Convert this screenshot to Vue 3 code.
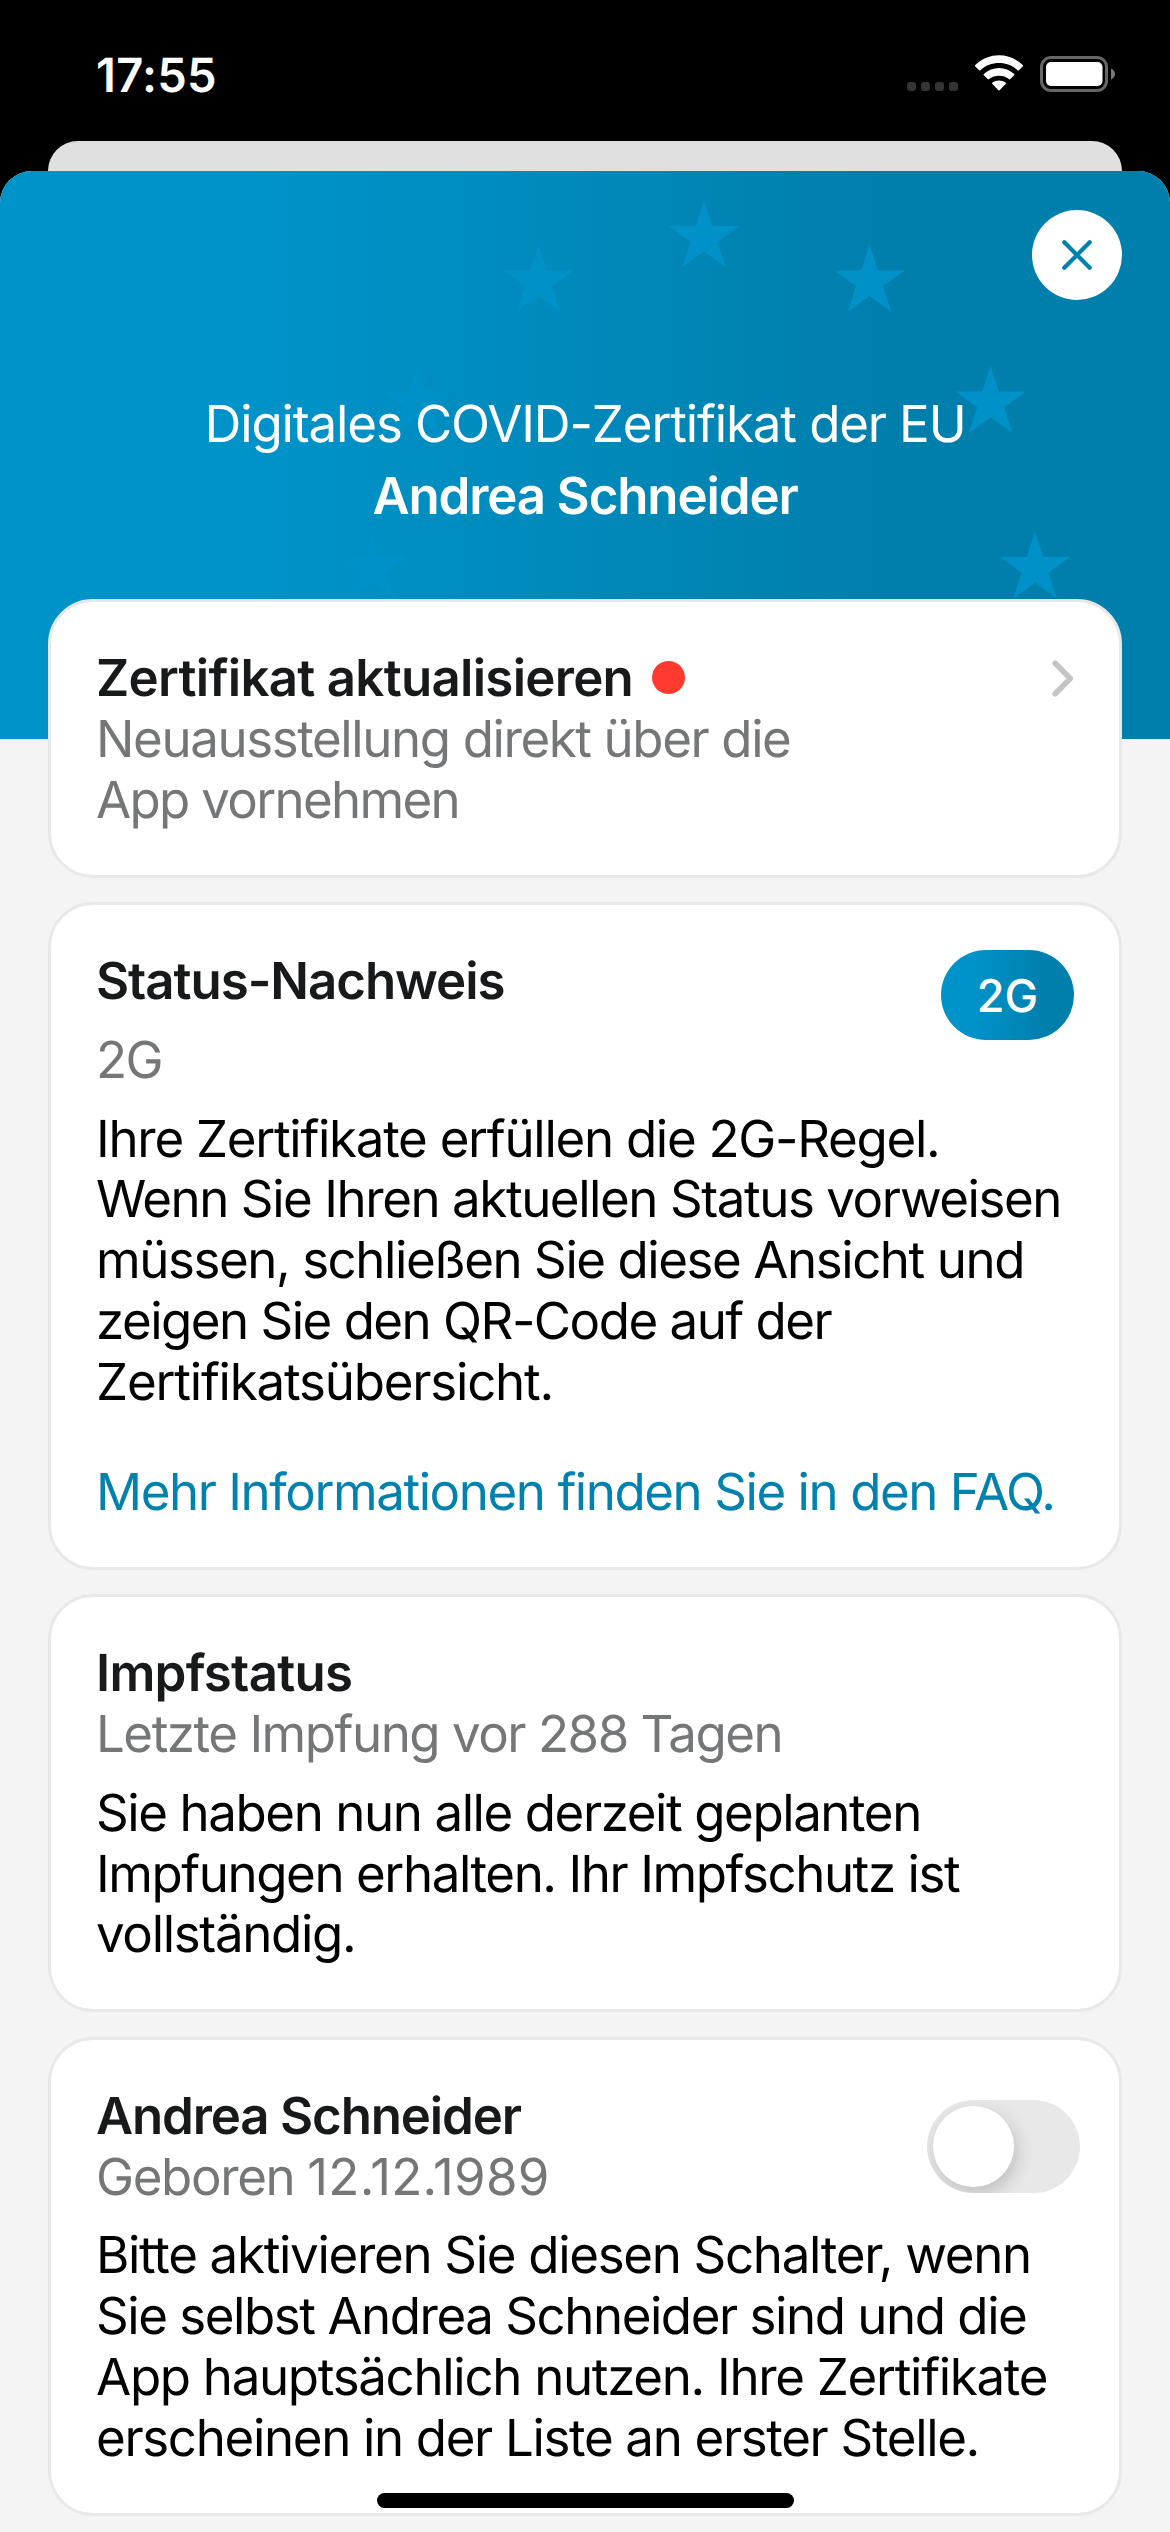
<script setup>
// Stars sit on a ring, one every 30 degrees, like on the EU flag.
const ring = { cx: 704, cy: 397.5, r: 331 }
const starRadius = 37

function starPoints(deg) {
  const a = (deg * Math.PI) / 180
  const cx = ring.cx + ring.r * Math.sin(a)
  const cy = ring.cy - ring.r * Math.cos(a)
  const points = []
  for (let i = 0; i < 10; i++) {
    const r = i % 2 ? starRadius * 0.382 : starRadius
    const t = (i * Math.PI) / 5
    points.push(`${(cx + r * Math.sin(t)).toFixed(2)},${(cy - r * Math.cos(t)).toFixed(2)}`)
  }
  return points.join(' ')
}

const stars = [-90, -60, -30, 0, 30, 60, 90].map(starPoints)

// Every block is a list of lines; ls is the tracking in px.
const cards = [
  {
    accessory: 'chevron',
    title: { t: 'Zertifikat aktualisieren', ls: -0.71 },
    unread: true,
    subtitle: [
      { t: 'Neuausstellung direkt über die', ls: -1.39 },
      { t: 'App vornehmen', ls: -1.68 },
    ],
    body: [],
  },
  {
    accessory: 'badge',
    spaced: true,
    title: { t: 'Status-Nachweis', ls: -1.05 },
    subtitle: [{ t: '2G', ls: -1.6 }],
    body: [
      { t: 'Ihre Zertifikate erfüllen die 2G-Regel.', ls: -1.27 },
      { t: 'Wenn Sie Ihren aktuellen Status vorweisen', ls: -1.43 },
      { t: 'müssen, schließen Sie diese Ansicht und', ls: -1.43 },
      { t: 'zeigen Sie den QR-Code auf der', ls: -1.5 },
      { t: 'Zertifikatsübersicht.', ls: -1.19 },
    ],
    link: { t: 'Mehr Informationen finden Sie in den FAQ.', ls: -1.43 },
  },
  {
    title: { t: 'Impfstatus', ls: -0.72 },
    subtitle: [{ t: 'Letzte Impfung vor 288 Tagen', ls: -1.47 }],
    body: [
      { t: 'Sie haben nun alle derzeit geplanten', ls: -1.41 },
      { t: 'Impfungen erhalten. Ihr Impfschutz ist', ls: -1.42 },
      { t: 'vollständig.', ls: -1.31 },
    ],
  },
  {
    accessory: 'switch',
    title: { t: 'Andrea Schneider', ls: -1.14 },
    subtitle: [{ t: 'Geboren ', ls: -1.35, value: { t: '12.12.1989', ls: 0.25 } }],
    body: [
      { t: 'Bitte aktivieren Sie diesen Schalter, wenn', ls: -1.3 },
      { t: 'Sie selbst Andrea Schneider sind und die', ls: -1.45 },
      { t: 'App hauptsächlich nutzen. Ihre Zertifikate', ls: -1.3 },
      { t: 'erscheinen in der Liste an erster Stelle.', ls: -1.33 },
    ],
  },
]

const tracking = (line) => ({ letterSpacing: `${line.ls}px` })
</script>

<template>
  <div class="screen">
    <div class="statusbar">
      <span class="time">17:55</span>
      <svg class="status-icons" width="209" height="38" viewBox="906 54 209 38">
        <g fill="#343434">
          <rect x="907" y="82" width="9" height="9" rx="3" />
          <rect x="921" y="82" width="9" height="9" rx="3" />
          <rect x="935" y="82" width="9" height="9" rx="3" />
          <rect x="949" y="82" width="9" height="9" rx="3" />
        </g>
        <g fill="#fff">
          <path d="M975.3 66.4a.9.9 0 0 1 0-1.3C988.5 52 1009.500 52 1022.700 65.100a.9.9 0 0 1 0 1.300l-3.900 3.900a.9.9 0 0 1-1.300 0C1007.600 60.600 990.400 60.600 980.500 70.300a.9.9 0 0 1-1.300 0z" />
          <path d="M983.8 75.200a.9.9 0 0 1 0-1.300C992.300 65.900 1005.700 65.900 1014.200 73.900a.9.9 0 0 1 0 1.300l-3.900 3.900a.9.9 0 0 1-1.300 0C1003.900 74.500 994.100 74.500 989 79.100a.9.9 0 0 1-1.300 0z" />
          <path d="M992.4 84a.9.9 0 0 1 0-1.400C996.200 79.700 1001.800 79.700 1005.600 82.600a.9.9 0 0 1 0 1.400l-6 6.300a.9.9 0 0 1-1.200 0z" />
        </g>
        <rect x="1041.500" y="57.500" width="65" height="33" rx="9.500" fill="none" stroke="#666" stroke-width="3" />
        <rect x="1046" y="62" width="56.500" height="24" rx="5" fill="#fff" />
        <path d="M1111 68.500c2.400 1 4 3.200 4 5.500s-1.600 4.500-4 5.500z" fill="#7a7a7a" />
      </svg>
    </div>

    <div class="behind"></div>

    <main class="sheet">
      <header class="hero">
        <svg class="stars" width="1170" height="568" viewBox="0 0 1170 568">
          <polygon v-for="points in stars" :key="points" :points="points" fill="#0091c8" />
        </svg>
        <button class="close" aria-label="Schließen">
          <svg width="90" height="90" viewBox="0 0 90 90">
            <path d="M32.300 32.200 57.700 57.800M57.700 32.200 32.300 57.800" fill="none" stroke="#0081ae" stroke-width="4.200" stroke-linecap="round" />
          </svg>
        </button>
        <p class="hero-title">Digitales COVID-Zertifikat der EU</p>
        <h1 class="hero-name">Andrea Schneider</h1>
      </header>

      <div class="cards">
        <section v-for="(card, i) in cards" :key="i" class="card">
          <div class="card-head" :class="{ spaced: card.spaced }">
            <div class="card-text">
              <h2 class="title">
                <span :style="tracking(card.title)">{{ card.title.t }}</span>
                <i v-if="card.unread" class="dot"></i>
              </h2>
              <div class="subtitle">
                <p v-for="line in card.subtitle" :key="line.t" :style="tracking(line)">{{ line.t }}<span v-if="line.value" :style="tracking(line.value)">{{ line.value.t }}</span></p>
              </div>
            </div>
            <svg v-if="card.accessory === 'chevron'" class="chevron" width="22" height="37" viewBox="0 0 22 37">
              <path d="M3.200 3.200 18.300 18.500 3.200 33.800" fill="none" stroke="#c4c4c6" stroke-width="5.600" stroke-linecap="round" stroke-linejoin="round" />
            </svg>
            <span v-if="card.accessory === 'badge'" class="badge">2G</span>
            <span v-if="card.accessory === 'switch'" class="switch"><span class="knob"></span></span>
          </div>
          <div v-if="card.body.length" class="body">
            <p v-for="line in card.body" :key="line.t" :style="tracking(line)">{{ line.t }}</p>
          </div>
          <a v-if="card.link" class="link" :style="tracking(card.link)">{{ card.link.t }}</a>
        </section>
      </div>
    </main>

    <div class="home-indicator"></div>
  </div>
</template>

<style>
body {
  margin: 0;
  background: #000;
}
</style>

<style scoped>
.screen {
  position: relative;
  display: flex;
  flex-direction: column;
  width: 1170px;
  height: 2532px;
  overflow: hidden;
  background: #000;
  font-family: Inter, "Liberation Sans", sans-serif;
  font-size: 51px;
  line-height: 60.86px;
  text-rendering: geometricPrecision;
  white-space: nowrap;
}

p,
h1,
h2 {
  margin: 0;
  font-size: inherit;
}

.subtitle p {
  white-space: pre;
}

.statusbar {
  display: flex;
  justify-content: space-between;
  flex: none;
  box-sizing: border-box;
  height: 141px;
  padding: 54px 55px 0 96px;
}

.time {
  color: #fff;
  font-size: 47px;
  font-weight: 600;
  line-height: 44px;
  letter-spacing: 0.3px;
}

.behind {
  flex: none;
  height: 30px;
  margin: 0 48px;
  border-radius: 30px 30px 0 0;
  background: #e0e0e0;
}

.sheet {
  flex: 1;
  overflow: hidden;
  border-radius: 32px 32px 0 0;
  background: #f4f4f4;
}

.hero {
  position: relative;
  display: flex;
  flex-direction: column;
  align-items: center;
  gap: 11px;
  box-sizing: border-box;
  height: 568px;
  padding-top: 224px;
  background: linear-gradient(90deg, #0093c9 22%, #007fad 76%);
  color: #fff;
}

.stars {
  position: absolute;
  top: 0;
  left: 0;
}

.close {
  position: absolute;
  top: 39px;
  right: 48px;
  width: 90px;
  height: 90px;
  padding: 0;
  border: 0;
  border-radius: 50%;
  background: #fff;
}

.close svg {
  display: block;
}

.hero-title {
  position: relative;
  letter-spacing: -1.13px;
}

.hero-name {
  position: relative;
  font-weight: 600;
  letter-spacing: -1.12px;
}

.cards {
  position: relative;
  display: flex;
  flex-direction: column;
  gap: 24.3px;
  margin: -140px 48px 0;
}

.card {
  box-sizing: border-box;
  padding: 47px 45px 43px;
  border: 3px solid #e8e8e8;
  border-radius: 45px;
  background: #fff;
}

.card-head {
  display: flex;
  justify-content: space-between;
  align-items: flex-start;
}

.title {
  display: flex;
  align-items: center;
  gap: 19px;
  color: #18191b;
  font-weight: 600;
}

.spaced .subtitle {
  margin-top: 18px;
}

.subtitle {
  color: #757678;
}

.body {
  margin-top: 18px;
  color: #000;
}

.link {
  display: block;
  margin-top: 49px;
  color: #0081ae;
}

.dot {
  width: 33px;
  height: 33px;
  margin-bottom: 4px;
  border-radius: 50%;
  background: #ff3b30;
}

.chevron {
  margin-top: 11px;
}

.badge {
  width: 133px;
  height: 90px;
  margin-top: -2px;
  border-radius: 45px;
  background: linear-gradient(90deg, #0093c9 25%, #007fad 78%);
  color: #fff;
  font-size: 45px;
  font-weight: 500;
  line-height: 92px;
  text-align: center;
}

.switch {
  box-sizing: border-box;
  width: 153px;
  height: 93px;
  margin: 13px -6px 0 0;
  padding: 6px;
  overflow: hidden;
  border-radius: 47px;
  background: #e8e8e8;
}

.knob {
  display: block;
  width: 81px;
  height: 81px;
  border-radius: 50%;
  background: #fff;
  box-shadow: 3px 7px 18px rgba(0, 0, 0, 0.18);
}

.home-indicator {
  position: absolute;
  bottom: 24px;
  left: 377px;
  width: 417px;
  height: 15px;
  border-radius: 8px;
  background: #000;
}
</style>
